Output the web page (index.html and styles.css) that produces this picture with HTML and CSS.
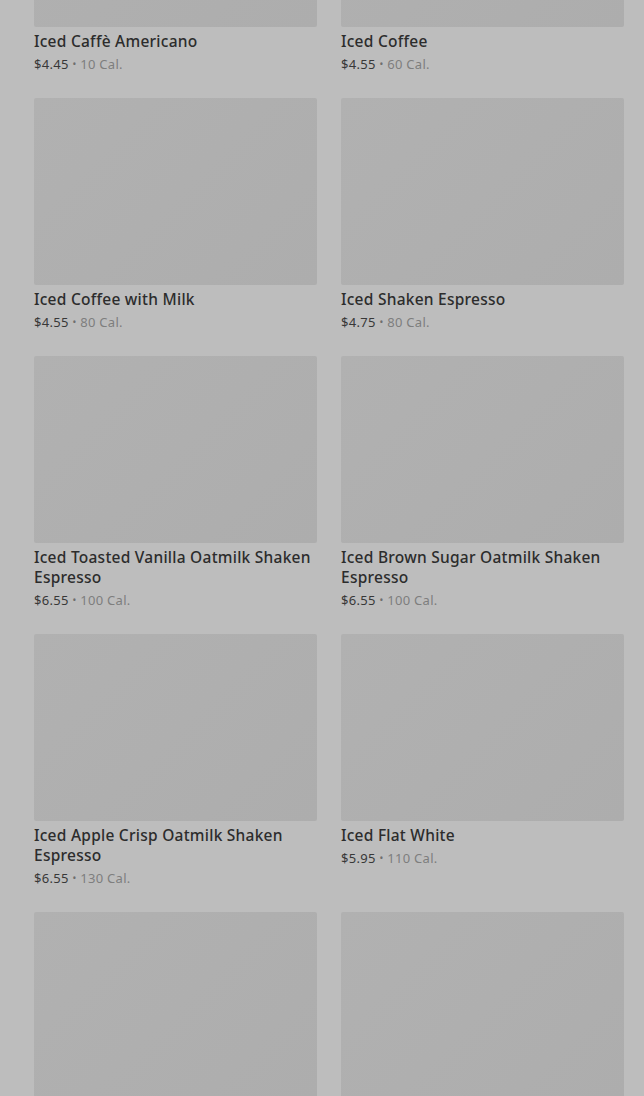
FILE: index.html
```html
<!DOCTYPE html>
<html lang="en">
<head>
<meta charset="utf-8">
<title>Iced Coffee Menu</title>
<link rel="stylesheet" href="styles.css">
</head>
<body>
<main class="page">
  <ul class="grid">
    <li class="card"><div class="thumb"></div><h3 class="name">Iced Caffè Americano</h3><p class="meta"><span class="price">$4.45</span> <span class="dot">•</span> <span class="cal">10 Cal.</span></p></li>
    <li class="card"><div class="thumb"></div><h3 class="name">Iced Coffee</h3><p class="meta"><span class="price">$4.55</span> <span class="dot">•</span> <span class="cal">60 Cal.</span></p></li>
    <li class="card"><div class="thumb"></div><h3 class="name">Iced Coffee with Milk</h3><p class="meta"><span class="price">$4.55</span> <span class="dot">•</span> <span class="cal">80 Cal.</span></p></li>
    <li class="card"><div class="thumb"></div><h3 class="name">Iced Shaken Espresso</h3><p class="meta"><span class="price">$4.75</span> <span class="dot">•</span> <span class="cal">80 Cal.</span></p></li>
    <li class="card"><div class="thumb"></div><h3 class="name">Iced Toasted Vanilla Oatmilk Shaken Espresso</h3><p class="meta"><span class="price">$6.55</span> <span class="dot">•</span> <span class="cal">100 Cal.</span></p></li>
    <li class="card"><div class="thumb"></div><h3 class="name">Iced Brown Sugar Oatmilk Shaken Espresso</h3><p class="meta"><span class="price">$6.55</span> <span class="dot">•</span> <span class="cal">100 Cal.</span></p></li>
    <li class="card"><div class="thumb"></div><h3 class="name">Iced Apple Crisp Oatmilk Shaken Espresso</h3><p class="meta"><span class="price">$6.55</span> <span class="dot">•</span> <span class="cal">130 Cal.</span></p></li>
    <li class="card"><div class="thumb"></div><h3 class="name">Iced Flat White</h3><p class="meta"><span class="price">$5.95</span> <span class="dot">•</span> <span class="cal">110 Cal.</span></p></li>
    <li class="card"><div class="thumb"></div></li>
    <li class="card"><div class="thumb"></div></li>
  </ul>
</main>
</body>
</html>
```
FILE: styles.css
```css
html, body {
  margin: 0;
  padding: 0;
  background: #bdbdbd;
  height: 100%;
  overflow: hidden;
}
body {
  font-family: "Noto Sans", "Liberation Sans", Arial, sans-serif;
  color: #2f2f2f;
}
.page {
  margin-top: -160px;
  padding-left: 34px;
}
.grid {
  list-style: none;
  margin: 0;
  padding: 0;
  display: grid;
  grid-template-columns: 283px 283px;
  column-gap: 24px;
  align-items: start;
}
.card {
  padding-bottom: 24px;
}
.thumb {
  height: 187px;
  background: linear-gradient(135deg, #b1b1b1 0%, #afafaf 50%, #adadad 100%);
  border-radius: 2px;
}
.name {
  margin: 4px 0 0;
  font-size: 15.5px;
  line-height: 20px;
  font-weight: 500;
  letter-spacing: 0.25px;
  color: #2c2c2c;
}
.meta {
  margin: 3px 0 0;
  height: 20px;
  font-size: 13px;
  line-height: 20px;
  letter-spacing: 0.3px;
}
.price {
  color: #383838;
}
.dot {
  color: #6e6e6e;
  font-size: 10px;
  line-height: 10px;
  vertical-align: 1px;
}
.cal {
  color: #7e7e7e;
}
```
